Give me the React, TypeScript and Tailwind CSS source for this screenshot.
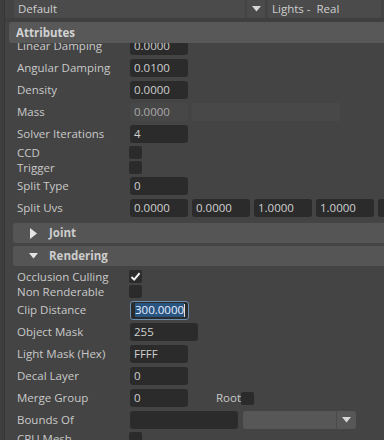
import React from 'react';

type FieldProps = { value?: string; w?: string; muted?: boolean };

function Field({ value = '', w = 'w-[58px]', muted = false }: FieldProps) {
  return (
    <div
      className={`${w} h-[18px] shrink-0 rounded-[3px] pl-1 text-[11.5px] leading-[18px] ${
        muted ? 'bg-[#474747] text-[#a9a9a9]' : 'bg-[#2b2b2b] text-[#d0d0d0]'
      }`}
    >
      {value}
    </div>
  );
}

function Check({ checked = false }: { checked?: boolean }) {
  return (
    <div className="-ml-px flex h-[13px] w-[13px] shrink-0 items-center justify-center rounded-[2px] bg-[#2b2b2b]">
      {checked && (
        <svg width="11" height="11" viewBox="0 0 11 11">
          <path d="M1.5 6 L4.2 8.6 L9.6 2.2" fill="none" stroke="#f2f2f2" strokeWidth="2" />
        </svg>
      )}
    </div>
  );
}

function Row({ label, short = false, children }: { label: string; short?: boolean; children?: React.ReactNode }) {
  return (
    <div className={`flex items-center ${short ? 'h-[15px]' : 'h-[22px]'}`}>
      <span className="w-[113px] shrink-0 whitespace-nowrap text-[11.5px] text-[#c9c9c9]">{label}</span>
      <div className="flex items-center gap-1">{children}</div>
    </div>
  );
}

function DownArrow({ color = '#d6d6d6' }: { color?: string }) {
  return (
    <svg width="9" height="6" viewBox="0 0 9 6">
      <path d="M0 0 H9 L4.5 5.5 Z" fill={color} />
    </svg>
  );
}

function Section({ title, open }: { title: string; open: boolean }) {
  return (
    <div className="ml-[8px] flex h-[20px] items-center rounded-l-[3px] bg-[#555555]">
      <div className="flex w-[36px] justify-center pl-[4px]">
        {open ? (
          <svg width="9" height="6" viewBox="0 0 9 6">
            <path d="M0 0 H9 L4.5 5.5 Z" fill="#e4e4e4" />
          </svg>
        ) : (
          <svg width="7" height="11" viewBox="0 0 7 11">
            <path d="M0 0 L7 5.5 L0 11 Z" fill="#e4e4e4" />
          </svg>
        )}
      </div>
      <span className="text-[11.5px] font-bold text-[#cdcdcd]">{title}</span>
    </div>
  );
}

export default function App() {
  return (
    <div className="flex h-[440px] w-[384px] overflow-hidden bg-[#444444] font-['Open_Sans',sans-serif]">
      <div className="w-[5px] shrink-0 border-r border-[#363636] bg-[#3e3e3e]" />
      <div className="flex min-w-0 flex-1 flex-col">
        {/* top selector bar */}
        <div className="flex h-[18px] shrink-0 items-stretch pl-[9px]">
          <div className="w-[231px] rounded-b-[2px] bg-[#4b4b4b] pl-1 text-[11.5px] leading-[18px] text-[#cfcfcf]">Default</div>
          <div className="ml-[2px] flex w-[18px] items-center justify-center bg-[#4b4b4b]">
            <DownArrow />
          </div>
          <div className="ml-[3px] w-[113px] rounded-b-[2px] bg-[#4b4b4b] pl-1 text-[11.5px] leading-[18px] text-[#cfcfcf]">
            Lights -&nbsp; Real
          </div>
        </div>
        <div className="h-[4px] shrink-0 bg-[#3f3f3f]" />

        <div className="ml-[4px] flex h-[21px] shrink-0 items-center rounded-l-[3px] bg-[#585858] pl-[7px]">
          <span className="text-[11.5px] font-bold text-[#d2d2d2]">Attributes</span>
        </div>

        <div className="min-h-0 flex-1 overflow-hidden">
          <div className="-mt-[8px]">
            <div className="pl-[12px]">
              <Row label="Linear Damping"><Field value="0.0000" /></Row>
              <Row label="Angular Damping"><Field value="0.0100" /></Row>
              <Row label="Density"><Field value="0.0000" /></Row>
              <Row label="Mass">
                <Field value="0.0000" muted />
                <div className="h-[18px] w-[148px] bg-[#484848]" />
              </Row>
              <Row label="Solver Iterations"><Field value="4" /></Row>
              <Row label="CCD" short><Check /></Row>
              <Row label="Trigger" short><Check /></Row>
              <Row label="Split Type"><Field value="0" /></Row>
              <Row label="Split Uvs">
                {['0.0000', '0.0000', '1.0000', '1.0000', ''].map((v, i) => (
                  <Field key={i} value={v} />
                ))}
              </Row>
            </div>

            <div className="mt-[4px]">
              <Section title="Joint" open={false} />
            </div>
            <div className="mt-[3px]">
              <Section title="Rendering" open />
            </div>

            <div className="mt-[3px] pl-[12px]">
              <Row label="Occlusion Culling" short><Check checked /></Row>
              <Row label="Non Renderable" short><Check /></Row>
              <Row label="Clip Distance">
                <div className="flex h-[19px] w-[59px] items-center rounded-[3px] border border-[#6b8fb3] bg-[#2b2b2b] pl-[4px] text-[11.5px]">
                  <span className="bg-[#2a5480] leading-[14px] text-[#e8f0ff]">300.0000</span>
                  <span className="h-[13px] w-px bg-[#e0e0e0]" />
                </div>
              </Row>
              <Row label="Object Mask"><Field value="255" w="w-[68px]" /></Row>
              <Row label="Light Mask (Hex)"><Field value="FFFF" /></Row>
              <Row label="Decal Layer"><Field value="0" /></Row>
              <Row label="Merge Group">
                <Field value="0" />
                <span className="ml-[24px] text-[11.5px] text-[#c9c9c9]">Root</span>
                <div className="-ml-[3px]"><Check /></div>
              </Row>
              <Row label="Bounds Of">
                <Field w="w-[108px]" />
                <div className="ml-px flex h-[18px] w-[113px] items-center rounded-[3px] bg-[#575757]">
                  <div className="flex-1" />
                  <div className="flex h-full w-[20px] items-center justify-center border-l border-[#4a4a4a]">
                    <DownArrow />
                  </div>
                </div>
              </Row>
              <Row label="CPU Mesh" short><Check /></Row>
            </div>
          </div>
        </div>
      </div>
    </div>
  );
}
